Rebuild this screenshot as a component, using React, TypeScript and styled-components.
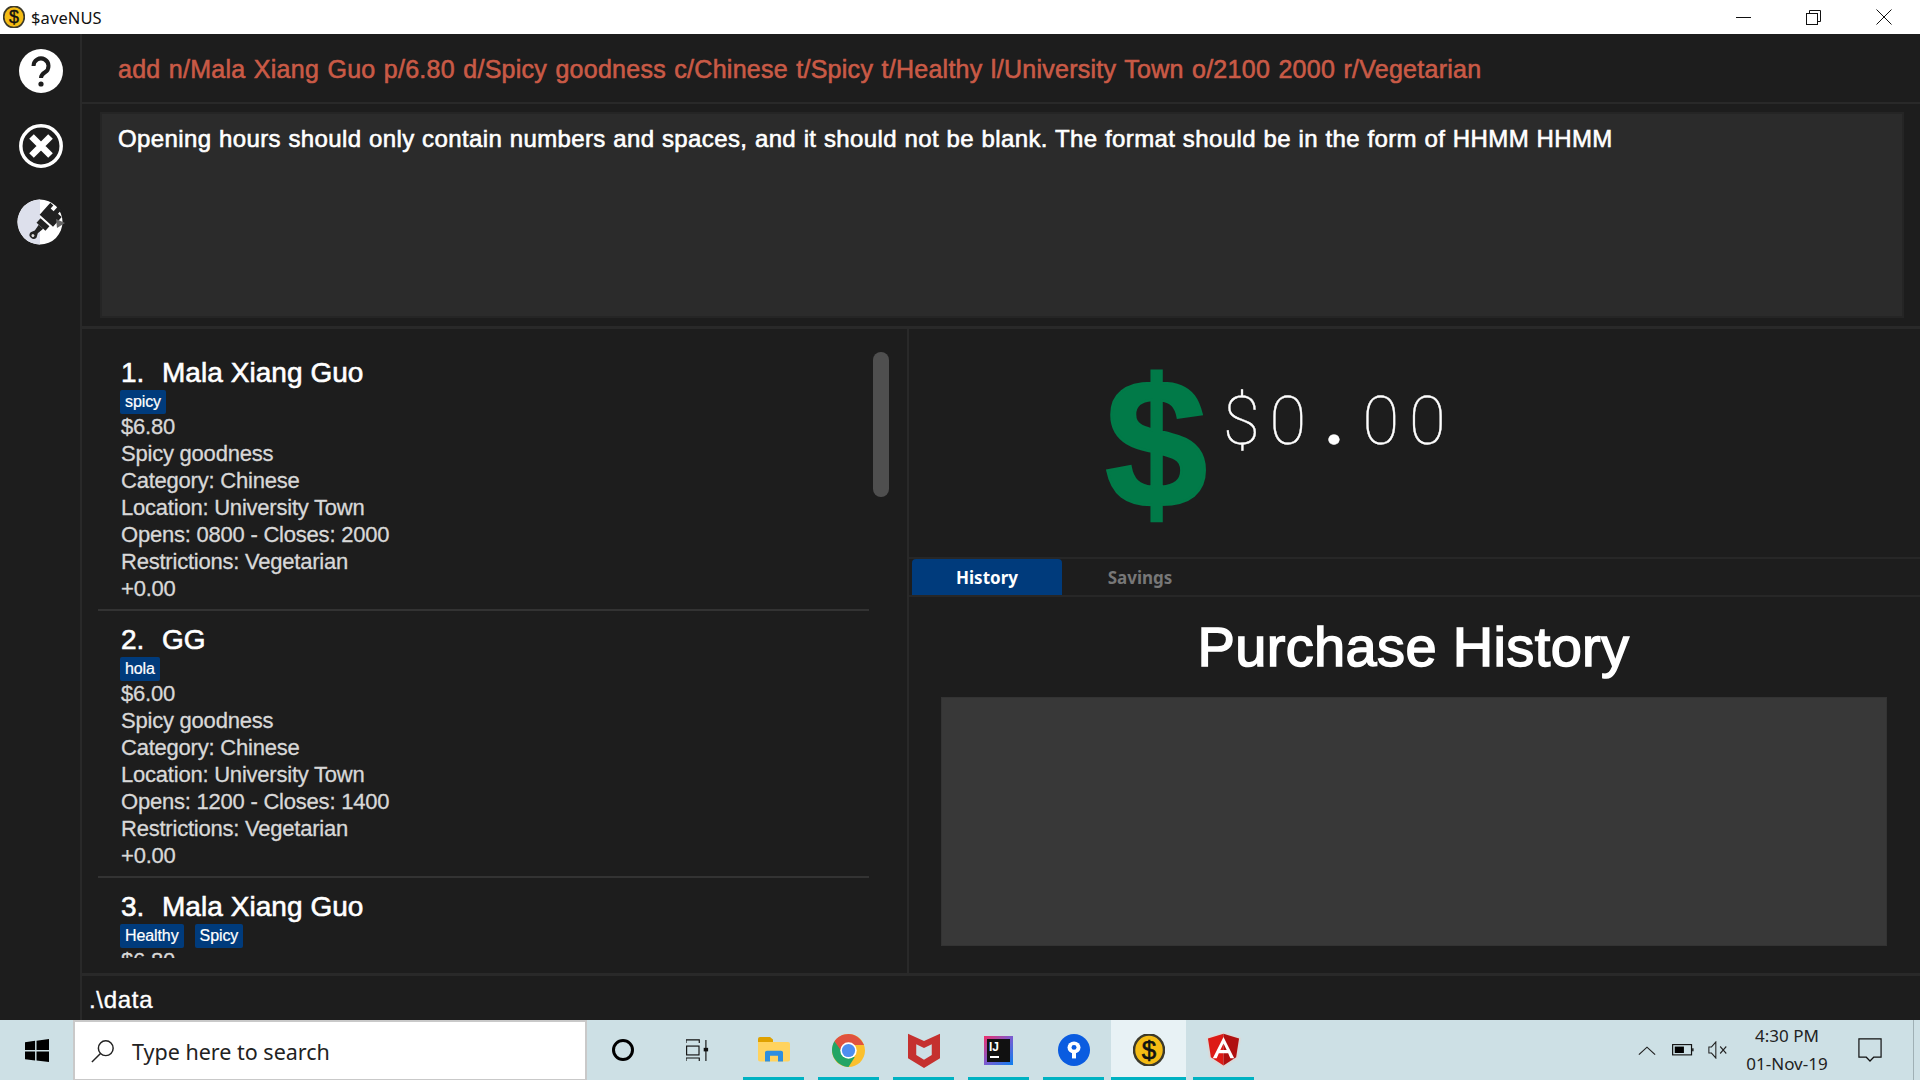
import React from 'react';
import styled, { createGlobalStyle } from 'styled-components';

const GlobalStyle = createGlobalStyle`
  html, body {
    margin: 0;
    padding: 0;
    background: #1d1d1d;
    overflow: hidden;
  }
  * {
    box-sizing: border-box;
  }
`;

const Screen = styled.div`
  width: 1920px;
  height: 1080px;
  display: flex;
  flex-direction: column;
  overflow: hidden;
  font-family: 'Liberation Sans', Arial, sans-serif;
`;

const TitleBar = styled.div`
  height: 34px;
  flex: none;
  display: flex;
  align-items: center;
  background: #fff;
  padding-left: 3px;
  position: relative;
`;

const TitleText = styled.span`
  margin-left: 6px;
  padding-top: 1px;
  font-family: 'Noto Sans', sans-serif;
  font-size: 16.5px;
  letter-spacing: 0.1px;
  color: #111;
`;

const WindowControls = styled.div`
  margin-left: auto;
  display: flex;
  align-items: center;
  padding-right: 28px;
  gap: 55px;
  color: #111;
`;

const AppBody = styled.div`
  flex: 1;
  min-height: 0;
  display: flex;
  background: #1d1d1d;
`;

const Sidebar = styled.div`
  width: 82px;
  flex: none;
  border-right: 2px solid #292929;
  display: flex;
  flex-direction: column;
  align-items: center;
  padding-top: 15px;
  padding-left: 2px;
  gap: 31px;
`;

const Main = styled.div`
  flex: 1;
  min-width: 0;
  display: flex;
  flex-direction: column;
`;

const CommandRow = styled.div`
  height: 70px;
  flex: none;
  display: flex;
  align-items: center;
  padding: 2px 0 0 36px;
  border-bottom: 2px solid #292929;
  font-size: 25px;
  letter-spacing: 0.27px;
  word-spacing: 1.1px;
  color: #c95a46;
  -webkit-text-stroke: 0.6px #c95a46;
  white-space: nowrap;
`;

const ResultRow = styled.div`
  height: 225px;
  flex: none;
  padding: 8px 16px 8px 18px;
  border-bottom: 3px solid #292929;
`;

const ResultBox = styled.div`
  height: 100%;
  background: #2b2b2b;
  border: 2px solid #252525;
  padding: 10px 16px;
  font-size: 24px;
  line-height: 30px;
  letter-spacing: 0.38px;
  word-spacing: 0.5px;
  color: #fff;
  -webkit-text-stroke: 0.6px #fff;
  white-space: nowrap;
`;

const Panels = styled.div`
  flex: 1;
  min-height: 0;
  display: flex;
  border-bottom: 3px solid #292929;
`;

const ListPanel = styled.div`
  width: 827px;
  flex: none;
  position: relative;
  padding: 15px 0 0 16px;
  border-right: 2px solid #292929;
`;

const ListClip = styled.div`
  width: 771px;
  height: 614px;
  overflow: hidden;
`;

const Card = styled.div`
  height: 267px;
  padding: 12px 0 0 23px;
  border-bottom: 2px solid #333;
`;

const CardTitle = styled.div`
  display: flex;
  height: 34px;
  align-items: center;
  font-size: 28px;
  letter-spacing: 0.05px;
  color: #fff;
  -webkit-text-stroke: 0.6px #fff;
  white-space: nowrap;
`;

const CardIndex = styled.span`
  width: 41px;
  flex: none;
`;

const TagRow = styled.div`
  display: flex;
  gap: 11px;
  margin-left: -1px;
`;

const Tag = styled.span`
  height: 24px;
  padding: 0 5px;
  display: flex;
  align-items: center;
  background: #003b7c;
  border-radius: 2px;
  font-size: 16px;
  letter-spacing: -0.1px;
  color: #fff;
  -webkit-text-stroke: 0.2px #fff;
`;

const CardLine = styled.div`
  height: 27px;
  line-height: 27px;
  font-size: 22px;
  letter-spacing: -0.22px;
  margin-top: -1px;
  margin-bottom: 1px;
  color: #d8d8d8;
  -webkit-text-stroke: 0.3px #d8d8d8;
  white-space: nowrap;
`;

const ScrollThumb = styled.div`
  position: absolute;
  top: 23px;
  left: 791px;
  width: 16px;
  height: 145px;
  border-radius: 8px;
  background: #4f4f4f;
`;

const RightPanel = styled.div`
  flex: 1;
  min-width: 0;
  display: flex;
  flex-direction: column;
`;

const BalanceRow = styled.div`
  height: 230px;
  flex: none;
  display: flex;
  padding-left: 196px;
  border-bottom: 2px solid #272727;
`;

const BigDollar = styled.span`
  width: 113px;
  flex: none;
  padding-top: 14px;
  font-size: 184px;
  line-height: 200px;
  font-weight: 700;
  color: #017a48;
  -webkit-text-stroke: 2.5px #017a48;
`;

const BalanceAmount = styled.div`
  display: flex;
  height: 86px;
  margin-top: 49px;
  font-family: Roboto, sans-serif;
  font-weight: 100;
  font-size: 67px;
  line-height: 86px;
  color: #fff;
  -webkit-text-stroke: 0.4px #fff;
`;

const AmountChar = styled.span<{ $dot?: boolean }>`
  width: 46.5px;
  text-align: center;
  font-weight: ${(p) => (p.$dot ? 700 : 100)};
`;

const TabBar = styled.div`
  height: 38px;
  flex: none;
  display: flex;
  padding-left: 3px;
  border-bottom: 2px solid #272727;
`;

const Tab = styled.div<{ $active?: boolean }>`
  width: 150px;
  margin-right: 3px;
  height: 36px;
  display: flex;
  align-items: center;
  justify-content: center;
  border-radius: 4px 4px 0 0;
  font-family: 'Noto Sans', sans-serif;
  font-size: 17px;
  font-weight: 700;
  background: ${(p) => (p.$active ? '#003b7c' : 'transparent')};
  color: ${(p) => (p.$active ? '#fff' : '#777')};
`;

const HistoryPanel = styled.div`
  flex: 1;
  min-height: 0;
  display: flex;
  flex-direction: column;
  align-items: center;
  padding: 18px 2px 0 0;
`;

const HistoryTitle = styled.div`
  height: 64px;
  line-height: 64px;
  font-size: 56px;
  letter-spacing: 0.35px;
  color: #fff;
  -webkit-text-stroke: 1.5px #fff;
`;

const HistoryBox = styled.div`
  width: 946px;
  height: 249px;
  margin-top: 18px;
  background: #383838;
  border: 1px solid #333;
`;

const StatusRow = styled.div`
  height: 44px;
  flex: none;
  display: flex;
  align-items: center;
  padding: 3px 0 0 7px;
  font-size: 24px;
  letter-spacing: 0.7px;
  color: #fff;
  -webkit-text-stroke: 0.4px #fff;
`;

const Taskbar = styled.div`
  height: 60px;
  flex: none;
  display: flex;
  align-items: stretch;
  background: #cde0e5;
  position: relative;
`;

const StartButton = styled.div`
  width: 73px;
  flex: none;
  display: flex;
  align-items: center;
  justify-content: center;
`;

const SearchBox = styled.div`
  width: 514px;
  flex: none;
  display: flex;
  align-items: center;
  gap: 17px;
  padding: 1px 0 0 16px;
  background: #fff;
  border: 2px solid #c9c9c9;
  border-bottom-width: 1px;
  font-family: 'Noto Sans', sans-serif;
  font-size: 21.5px;
  color: #222;
`;

const TaskItem = styled.div<{ $width?: number; $open?: boolean; $active?: boolean }>`
  width: ${(p) => p.$width ?? 75}px;
  flex: none;
  display: flex;
  align-items: center;
  justify-content: center;
  position: relative;
  background: ${(p) => (p.$active ? '#e8f2f5' : 'transparent')};
  &::after {
    content: '';
    display: ${(p) => (p.$open ? 'block' : 'none')};
    position: absolute;
    left: ${(p) => (p.$active ? 0 : 7)}px;
    right: ${(p) => (p.$active ? 0 : 7)}px;
    bottom: 0;
    height: 3px;
    background: #00b2c2;
  }
`;

const Tray = styled.div`
  margin-left: auto;
  display: flex;
  align-items: center;
  padding-right: 38px;
`;

const BatteryIcon = styled.svg`
  margin-left: 16px;
`;

const SpeakerIcon = styled.svg`
  margin-left: 14px;
`;

const Clock = styled.div`
  width: 106px;
  margin: 0 18px 0 6px;
  text-align: center;
  font-family: 'Noto Sans', sans-serif;
  font-size: 17px;
  line-height: 28px;
  color: #222;
`;

const TaskbarEdge = styled.div`
  position: absolute;
  right: 6px;
  top: 0;
  bottom: 0;
  width: 1px;
  background: #9fb0b5;
`;

const CoinIcon = ({ size }: { size: number }) => (
  <svg width={size} height={size} viewBox="0 0 32 32">
    <ellipse cx="16" cy="16" rx="15" ry="15.5" fill="#f5bc14" stroke="#3d3a2a" strokeWidth="2.5" />
    <text x="16" y="25" textAnchor="middle" fontSize="26" fontFamily="Liberation Sans" fill="#111" stroke="#111" strokeWidth="0.6">
      $
    </text>
  </svg>
);

const HelpIcon = () => (
  <svg width="44" height="44" viewBox="0 0 44 44">
    <circle cx="22" cy="22" r="22" fill="#fff" />
    <path d="M14.5 17a7.5 7.5 0 1 1 11.5 6.3c-2.4 1.5-4 2.6-4 5.7" fill="none" stroke="#1d1d1d" strokeWidth="4" />
    <circle cx="22" cy="35" r="2.6" fill="#1d1d1d" />
  </svg>
);

const CloseIcon = () => (
  <svg width="44" height="44" viewBox="0 0 44 44">
    <circle cx="22" cy="22" r="20.200" fill="none" stroke="#fff" strokeWidth="3.500" />
    <path d="M12.500 12.500l19 19M31.500 12.500l-19 19" stroke="#fff" strokeWidth="6.500" />
  </svg>
);

const BrushIcon = () => (
  <svg width="48" height="46" viewBox="0 0 48 46">
    <circle cx="23" cy="23" r="22.5" fill="#fff" />
    <path d="M23 .5a22.5 22.5 0 0 0 0 45z" fill="#dde0ec" />
    <g transform="translate(30 21) rotate(42)">
      <path d="M-9 1V-15h4v4h4v-6h5v5h5V1z" fill="#222" />
      <rect x="-6" y="3" width="12" height="6" fill="#222" />
      <path d="M-3 9h6l-1 7 2 4a4 4 0 0 1-8 0l2-4z" fill="#222" />
      <circle cx="0" cy="21" r="1.500" fill="#ddd" />
    </g>
    <path d="M39 20l9 4-8 5z" fill="#666" />
  </svg>
);

const WindowsLogo = () => (
  <svg width="24" height="23" viewBox="0 0 25 25" preserveAspectRatio="none">
    <path d="M0 3.500l10.500-1.500v10H0zM12 1.800L25 0v12H12zM0 13.500h10.500v9.800L0 22zM12 13.500h13V25l-13-1.700z" fill="#000" />
  </svg>
);

const SearchIcon = () => (
  <svg width="24" height="24" viewBox="0 0 26 26" fill="none" stroke="#222" strokeWidth="1.600">
    <circle cx="16" cy="10" r="8" />
    <path d="M10 16L1 25" />
  </svg>
);

const CortanaIcon = () => (
  <svg width="24" height="24" viewBox="0 0 24 24">
    <circle cx="12" cy="12" r="9.500" fill="none" stroke="#000" strokeWidth="3" />
  </svg>
);

const TaskViewIcon = () => (
  <svg width="23" height="23" viewBox="0 0 26 26" fill="none" stroke="#111" strokeWidth="1.300">
    <path d="M0 4.500V1h15v3.500M0 25v-3.500h15V25" />
    <rect x="0.700" y="8" width="14" height="10" />
    <path d="M22.500 1v24" />
    <rect x="20" y="10" width="5" height="4" fill="#111" stroke="none" />
  </svg>
);

const FolderIcon = () => (
  <svg width="32" height="26" viewBox="0 0 32 32" preserveAspectRatio="none">
    <path d="M0 2a2 2 0 0 1 2-2h10l3 3v5H0z" fill="#dfa100" />
    <path d="M0 6h30a2 2 0 0 1 2 2v20a2 2 0 0 1-2 2H2a2 2 0 0 1-2-2z" fill="#ffd35f" />
    <path d="M7 30V19a2 2 0 0 1 2-2h14a2 2 0 0 1 2 2v11h-5v-7h-8v7z" fill="#2d8ee0" />
  </svg>
);

const ChromeIcon = () => (
  <svg width="33" height="33" viewBox="0 0 34 36" preserveAspectRatio="none">
    <ellipse cx="17" cy="18" rx="17" ry="18" fill="#fbc02d" />
    <path d="M17 0C11 0 5.500 3 2.500 8l7 13 7.500-9h16C30 5 24 0 17 0z" fill="#e0523f" />
    <path d="M2.500 8C-1 14-.8 22 3 27.500 6 32 11 35.500 17 36l6.500-11-9 .5z" fill="#22a565" />
    <ellipse cx="17" cy="18" rx="8.500" ry="9" fill="#fff" />
    <ellipse cx="17" cy="18" rx="6.800" ry="7.200" fill="#4d8ef0" />
  </svg>
);

const McafeeIcon = () => (
  <svg width="32" height="36" viewBox="0 0 33 44" preserveAspectRatio="none">
    <path d="M0 2l16.500 9L33 2v30L16.500 44 0 32z" fill="#c5312f" />
    <path d="M8.500 15l8 4.500 8-4.500v13l-8 6-8-6z" fill="#cde0e5" />
  </svg>
);

const IdeaIcon = () => (
  <svg width="29" height="29" viewBox="0 0 29 29">
    <defs>
      <linearGradient id="ij" x1="0" y1="0" x2="1" y2="1">
        <stop offset="0" stopColor="#f0306a" />
        <stop offset="0.5" stopColor="#7a5bd0" />
        <stop offset="1" stopColor="#0a80f0" />
      </linearGradient>
    </defs>
    <rect width="29" height="29" fill="url(#ij)" />
    <rect x="3" y="3" width="23" height="23" fill="#111" />
    <text x="5" y="15" fontSize="12" fontWeight="700" fontFamily="Liberation Sans" fill="#fff">
      IJ
    </text>
    <rect x="6" y="20" width="9" height="2" fill="#fff" />
  </svg>
);

const SourcetreeIcon = () => (
  <svg width="32" height="32" viewBox="0 0 32 38" preserveAspectRatio="none">
    <ellipse cx="16" cy="19" rx="16" ry="19" fill="#0a5ce0" />
    <ellipse cx="16" cy="16" rx="6.500" ry="7" fill="#fff" />
    <ellipse cx="16" cy="16" rx="2.500" ry="2.800" fill="#0a5ce0" />
    <rect x="14" y="20" width="4" height="9" fill="#fff" />
  </svg>
);

const AngularIcon = () => (
  <svg width="35" height="36" viewBox="0 0 36 44" preserveAspectRatio="none">
    <path d="M18 0L0 7l3 25 15 12 15-12 3-25z" fill="#d9d9d9" />
    <path d="M18 2L2 8l3 23 13 10z" fill="#dd1b16" />
    <path d="M18 2l16 6-3 23-13 10z" fill="#b01010" />
    <path d="M18 6L7 32h4l2.200-6h9.600l2.200 6h4zm-3.300 16L18 14l3.300 8z" fill="#fff" />
  </svg>
);

const CARDS = [
  {
    index: '1.',
    name: 'Mala Xiang Guo',
    tags: ['spicy'],
    lines: ['$6.80', 'Spicy goodness', 'Category: Chinese', 'Location: University Town', 'Opens: 0800 - Closes: 2000', 'Restrictions: Vegetarian', '+0.00'],
  },
  {
    index: '2.',
    name: 'GG',
    tags: ['hola'],
    lines: ['$6.00', 'Spicy goodness', 'Category: Chinese', 'Location: University Town', 'Opens: 1200 - Closes: 1400', 'Restrictions: Vegetarian', '+0.00'],
  },
  {
    index: '3.',
    name: 'Mala Xiang Guo',
    tags: ['Healthy', 'Spicy'],
    lines: ['$6.80'],
  },
];

function App(): JSX.Element {
  return (
    <Screen>
      <GlobalStyle />
      <TitleBar>
        <CoinIcon size={22} />
        <TitleText>$aveNUS</TitleText>
        <WindowControls>
          <svg width="15" height="15" viewBox="0 0 15 15" stroke="currentColor" fill="none">
            <path d="M0 7.500h15" />
          </svg>
          <svg width="15" height="15" viewBox="0 0 15 15" stroke="currentColor" fill="none">
            <rect x="0.500" y="3.500" width="11" height="11" />
            <path d="M3.500 3.500v-3h11v11h-3" />
          </svg>
          <svg width="16" height="16" viewBox="0 0 16 16" stroke="currentColor" fill="none">
            <path d="M0.500 0.500l15 15M15.500 0.500l-15 15" />
          </svg>
        </WindowControls>
      </TitleBar>
      <AppBody>
        <Sidebar>
          <HelpIcon />
          <CloseIcon />
          <BrushIcon />
        </Sidebar>
        <Main>
          <CommandRow>add n/Mala Xiang Guo p/6.80 d/Spicy goodness c/Chinese t/Spicy t/Healthy l/University Town o/2100 2000 r/Vegetarian</CommandRow>
          <ResultRow>
            <ResultBox>Opening hours should only contain numbers and spaces, and it should not be blank. The format should be in the form of HHMM HHMM</ResultBox>
          </ResultRow>
          <Panels>
            <ListPanel>
              <ListClip>
                {CARDS.map((card) => (
                  <Card key={card.index}>
                    <CardTitle>
                      <CardIndex>{card.index}</CardIndex>
                      {card.name}
                    </CardTitle>
                    <TagRow>
                      {card.tags.map((tag) => (
                        <Tag key={tag}>{tag}</Tag>
                      ))}
                    </TagRow>
                    {card.lines.map((line) => (
                      <CardLine key={line}>{line}</CardLine>
                    ))}
                  </Card>
                ))}
              </ListClip>
              <ScrollThumb />
            </ListPanel>
            <RightPanel>
              <BalanceRow>
                <BigDollar>$</BigDollar>
                <BalanceAmount>
                  {'$0.00'.split('').map((ch, i) => (
                    <AmountChar key={i} $dot={ch === '.'}>
                      {ch}
                    </AmountChar>
                  ))}
                </BalanceAmount>
              </BalanceRow>
              <TabBar>
                <Tab $active>History</Tab>
                <Tab>Savings</Tab>
              </TabBar>
              <HistoryPanel>
                <HistoryTitle>Purchase History</HistoryTitle>
                <HistoryBox />
              </HistoryPanel>
            </RightPanel>
          </Panels>
          <StatusRow>.\data</StatusRow>
        </Main>
      </AppBody>
      <Taskbar>
        <StartButton>
          <WindowsLogo />
        </StartButton>
        <SearchBox>
          <SearchIcon />
          Type here to search
        </SearchBox>
        <TaskItem $width={72}>
          <CortanaIcon />
        </TaskItem>
        <TaskItem $width={77}>
          <TaskViewIcon />
        </TaskItem>
        <TaskItem $open>
          <FolderIcon />
        </TaskItem>
        <TaskItem $open>
          <ChromeIcon />
        </TaskItem>
        <TaskItem $open>
          <McafeeIcon />
        </TaskItem>
        <TaskItem $open>
          <IdeaIcon />
        </TaskItem>
        <TaskItem $open>
          <SourcetreeIcon />
        </TaskItem>
        <TaskItem $open $active>
          <CoinIcon size={32} />
        </TaskItem>
        <TaskItem $open>
          <AngularIcon />
        </TaskItem>
        <Tray>
          <svg width="18" height="9" viewBox="0 0 20 12" fill="none" stroke="#222" strokeWidth="1.300" preserveAspectRatio="none">
            <path d="M1 11.500l9-10 9 10" />
          </svg>
          <BatteryIcon width="22" height="12" viewBox="0 0 24 14" preserveAspectRatio="none">
            <rect x="0.700" y="0.700" width="20.600" height="12" fill="none" stroke="#111" strokeWidth="1.300" />
            <rect x="3" y="3" width="10" height="7.500" fill="#000" />
            <rect x="22" y="5" width="1.500" height="3.500" fill="#111" />
          </BatteryIcon>
          <SpeakerIcon width="20" height="18" viewBox="0 0 23 18" fill="none" stroke="#222" strokeWidth="1.200" preserveAspectRatio="none">
            <path d="M1 6v6h3l5 5V1L4 6z" />
            <path d="M14 5.500l7 7M21 5.500l-7 7" />
          </SpeakerIcon>
          <Clock>
            <div>4:30 PM</div>
            <div>01-Nov-19</div>
          </Clock>
          <svg width="24" height="24" viewBox="0 0 26 25" fill="none" stroke="#111" strokeWidth="1.300" preserveAspectRatio="none">
            <path d="M1 1h24v19h-8l-4 4-4-4H1z" />
          </svg>
        </Tray>
        <TaskbarEdge />
      </Taskbar>
    </Screen>
  );
}

export default App;
